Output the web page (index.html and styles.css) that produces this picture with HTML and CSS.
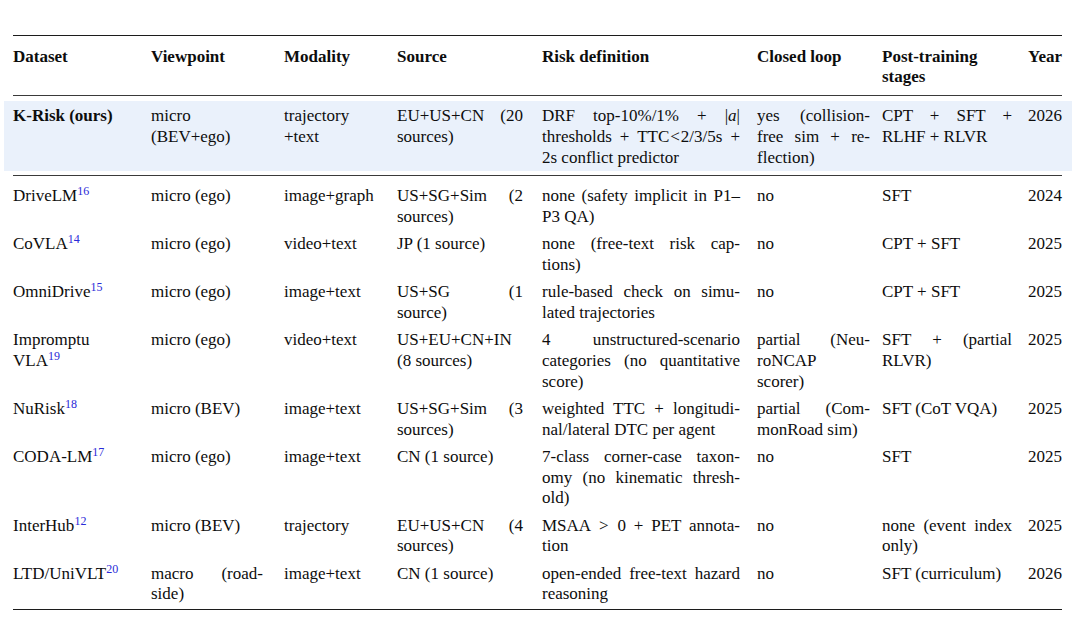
FILE: index.html
```html
<!DOCTYPE html>
<html lang="en">
<head>
<meta charset="utf-8">
<title>Dataset comparison</title>
<link rel="stylesheet" href="styles.css">
</head>
<body>
<div class="sheet">
  <div class="rule thick"></div>
  <div class="row head">
    <div class="c c1">Dataset</div>
    <div class="c c2">Viewpoint</div>
    <div class="c c3">Modality</div>
    <div class="c c4">Source</div>
    <div class="c c5">Risk definition</div>
    <div class="c c6">Closed loop</div>
    <div class="c c7">Post-training<br>stages</div>
    <div class="c c8 left">Year</div>
  </div>
  <div class="rule thin"></div>
  <div class="row ours">
    <div class="c c1"><b>K-Risk (ours)</b></div>
    <div class="c c2"><span class="l j">micro</span><span class="l">(BEV+ego)</span></div>
    <div class="c c3"><span class="l">trajectory</span><span class="l">+text</span></div>
    <div class="c c4"><span class="l j">EU+US+CN (20</span><span class="l">sources)</span></div>
    <div class="c c5"><span class="l j">DRF top-10%/1% + |<i>a</i>|</span><span class="l j">thresholds + TTC<span class="op">&lt;</span>2/3/5s +</span><span class="l">2s conflict predictor</span></div>
    <div class="c c6"><span class="l j">yes (collision-</span><span class="l j">free sim + re-</span><span class="l">flection)</span></div>
    <div class="c c7"><span class="l j">CPT + SFT +</span><span class="l">RLHF + RLVR</span></div>
    <div class="c c8">2026</div>
  </div>
  <div class="rule thin"></div>
  <div class="body">
    <div class="row">
      <div class="c c1">DriveLM<sup>16</sup></div>
      <div class="c c2">micro (ego)</div>
      <div class="c c3">image+graph</div>
      <div class="c c4"><span class="l j">US+SG+Sim (2</span><span class="l">sources)</span></div>
      <div class="c c5"><span class="l j">none (safety implicit in P1–</span><span class="l">P3 QA)</span></div>
      <div class="c c6">no</div>
      <div class="c c7">SFT</div>
      <div class="c c8">2024</div>
    </div>
    <div class="row">
      <div class="c c1">CoVLA<sup>14</sup></div>
      <div class="c c2">micro (ego)</div>
      <div class="c c3">video+text</div>
      <div class="c c4">JP (1 source)</div>
      <div class="c c5"><span class="l j">none (free-text risk cap-</span><span class="l">tions)</span></div>
      <div class="c c6">no</div>
      <div class="c c7">CPT + SFT</div>
      <div class="c c8">2025</div>
    </div>
    <div class="row">
      <div class="c c1">OmniDrive<sup>15</sup></div>
      <div class="c c2">micro (ego)</div>
      <div class="c c3">image+text</div>
      <div class="c c4"><span class="l j">US+SG (1</span><span class="l">source)</span></div>
      <div class="c c5"><span class="l j">rule-based check on simu-</span><span class="l">lated trajectories</span></div>
      <div class="c c6">no</div>
      <div class="c c7">CPT + SFT</div>
      <div class="c c8">2025</div>
    </div>
    <div class="row">
      <div class="c c1"><span class="l">Impromptu</span><span class="l">VLA<sup>19</sup></span></div>
      <div class="c c2">micro (ego)</div>
      <div class="c c3">video+text</div>
      <div class="c c4"><span class="l">US+EU+CN+IN</span><span class="l">(8 sources)</span></div>
      <div class="c c5"><span class="l j">4 unstructured-scenario</span><span class="l j">categories (no quantitative</span><span class="l">score)</span></div>
      <div class="c c6"><span class="l j">partial (Neu-</span><span class="l">roNCAP</span><span class="l">scorer)</span></div>
      <div class="c c7"><span class="l j">SFT + (partial</span><span class="l">RLVR)</span></div>
      <div class="c c8">2025</div>
    </div>
    <div class="row">
      <div class="c c1">NuRisk<sup>18</sup></div>
      <div class="c c2">micro (BEV)</div>
      <div class="c c3">image+text</div>
      <div class="c c4"><span class="l j">US+SG+Sim (3</span><span class="l">sources)</span></div>
      <div class="c c5"><span class="l j">weighted TTC + longitudi-</span><span class="l">nal/lateral DTC per agent</span></div>
      <div class="c c6"><span class="l j">partial (Com-</span><span class="l">monRoad sim)</span></div>
      <div class="c c7">SFT (CoT VQA)</div>
      <div class="c c8">2025</div>
    </div>
    <div class="row">
      <div class="c c1">CODA-LM<sup>17</sup></div>
      <div class="c c2">micro (ego)</div>
      <div class="c c3">image+text</div>
      <div class="c c4">CN (1 source)</div>
      <div class="c c5"><span class="l j">7-class corner-case taxon-</span><span class="l j">omy (no kinematic thresh-</span><span class="l">old)</span></div>
      <div class="c c6">no</div>
      <div class="c c7">SFT</div>
      <div class="c c8">2025</div>
    </div>
    <div class="row">
      <div class="c c1">InterHub<sup>12</sup></div>
      <div class="c c2">micro (BEV)</div>
      <div class="c c3">trajectory</div>
      <div class="c c4"><span class="l j">EU+US+CN (4</span><span class="l">sources)</span></div>
      <div class="c c5"><span class="l j">MSAA <span class="op">&gt;</span> 0 + PET annota-</span><span class="l">tion</span></div>
      <div class="c c6">no</div>
      <div class="c c7"><span class="l j">none (event index</span><span class="l">only)</span></div>
      <div class="c c8">2025</div>
    </div>
    <div class="row">
      <div class="c c1">LTD/UniVLT<sup>20</sup></div>
      <div class="c c2"><span class="l j">macro (road-</span><span class="l">side)</span></div>
      <div class="c c3">image+text</div>
      <div class="c c4">CN (1 source)</div>
      <div class="c c5"><span class="l j">open-ended free-text hazard</span><span class="l">reasoning</span></div>
      <div class="c c6">no</div>
      <div class="c c7">SFT (curriculum)</div>
      <div class="c c8">2026</div>
    </div>
  </div>
  <div class="rule thick"></div>
</div>
</body>
</html>
```

FILE: styles.css
```css
html, body {
  margin: 0;
  padding: 0;
  background: #ffffff;
}

body {
  font-family: "Liberation Serif", "Times New Roman", serif;
  font-size: 17px;
  line-height: 20.7px;
  color: #0d0d0d;
}

.sheet {
  margin: 0 8px 0 4px;
  padding-top: 35px;
}

.rule {
  margin: 0 10px 0 9px;
  height: 0;
}

.rule.thick {
  border-top: 1.6px solid #1c1c1c;
}

.rule.thin {
  border-top: 1px solid #3a3a3a;
}

.row {
  display: grid;
  grid-template-columns: 138px 133px 113px 145px 215px 125px 146px 34px;
  padding: 3.3px 10px 3.3px 9px;
}

.row.head {
  font-weight: bold;
  padding-top: 10.6px;
  padding-bottom: 7.4px;
}

.row.ours {
  background: #eaf1fb;
  margin: 5px 0 4px;
  padding-top: 5px;
  padding-bottom: 2px;
}

.body {
  padding-top: 7.3px;
  padding-bottom: 0.5px;
}

.c {
  text-align: left;
}

.c2 { padding-right: 21px; }
.c3 { padding-right: 10px; }
.c4 { padding-right: 19px; }
.c5 { padding-right: 17px; }
.c6 { padding-right: 12px; }
.c7 { padding-right: 16px; }
.c8 { text-align: right; white-space: nowrap; }
.c8.left { text-align: left; }

.l {
  display: block;
  white-space: nowrap;
}

.l.j {
  text-align: justify;
  text-align-last: justify;
  white-space: normal;
}

.op {
  padding: 0 1px;
}

sup {
  font-size: 12px;
  line-height: 0;
  vertical-align: 6px;
  color: #2a2ad8;
}
```
